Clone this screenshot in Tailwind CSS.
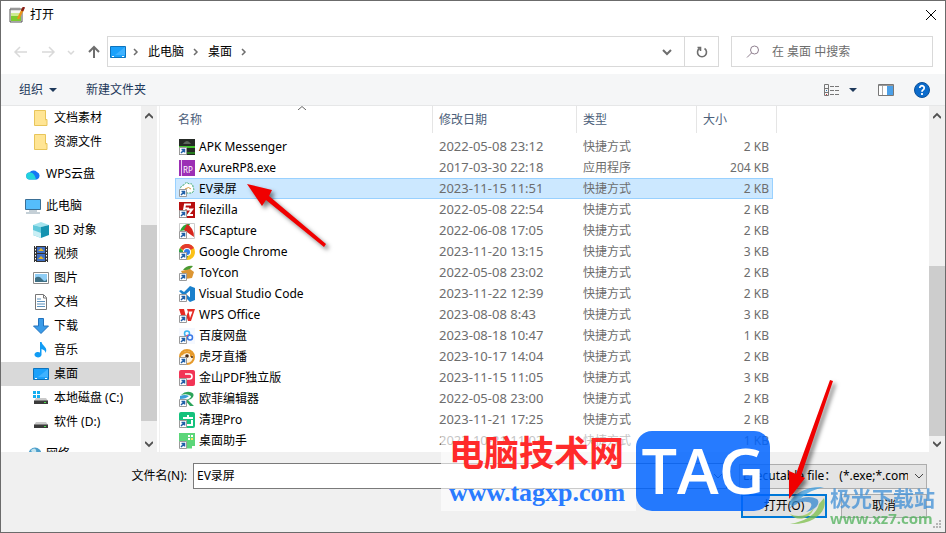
<!DOCTYPE html>
<html lang="zh-CN">
<head>
<meta charset="utf-8">
<meta name="viewport" content="width=device-width, initial-scale=1">
<title>打开</title>
<script src="https://cdn.jsdelivr.net/npm/@tailwindcss/browser@4"></script>
</head>

<body class="bg-white text-black text-xs font-['Noto_Sans','Noto_Sans_CJK_SC',sans-serif]">

<div class="relative h-screen flex flex-col border border-[#6b6b6b] overflow-hidden">

  <!-- Title bar -->
  <header class="flex items-center justify-between h-7 pl-2 pr-1 shrink-0">
    <div class="flex items-center gap-1">
      <svg class="w-4 h-4" viewBox="0 0 16 16">
        <path d="M1 2h12v13H1z" fill="#f4f4f4" stroke="#555"/>
        <path d="M2 8h10v6H2z" fill="#7ccb2f"/><path d="M2 6h10v3H2z" fill="#cdeb8f"/>
        <path d="M2 .5v3M4 .5v3M6 .5v3M8 .5v3M10 .5v3" stroke="#888"/>
        <path d="M14 2L9 12" stroke="#e8941a" stroke-width="2.500"/>
        <path d="M15 0l-2 4" stroke="#8a1f16" stroke-width="2.500"/>
      </svg>
      <h1 class="ml-px">打开</h1>
    </div>
    <button class="p-1" aria-label="关闭">
      <svg class="w-3 h-3" viewBox="0 0 12 12" fill="none" stroke="#000"><path d="M1 1l10 10M11 1L1 11"/></svg>
    </button>
  </header>

  <!-- Navigation and address -->
  <div class="flex items-center h-11 pt-px pl-3 pr-3 shrink-0">
    <nav class="flex items-center w-[93px] gap-[11px] shrink-0">
      <button aria-label="后退"><svg class="w-4 h-4" viewBox="0 0 16 16" fill="none" stroke="#d9d9d9" stroke-width="1.500"><path d="M14 8H2M7 3L2 8l5 5"/></svg></button>
      <button aria-label="前进"><svg class="w-4 h-4" viewBox="0 0 16 16" fill="none" stroke="#d9d9d9" stroke-width="1.500"><path d="M2 8h12M9 3l5 5-5 5"/></svg></button>
      <button aria-label="最近"><svg class="w-2 h-2" viewBox="0 0 8 8" fill="none" stroke="#d9d9d9" stroke-width="1.500"><path d="M1 3l3 3 3-3"/></svg></button>
      <button aria-label="向上"><svg class="w-4 h-4" viewBox="0 0 16 16" fill="none" stroke="#6e6e6e" stroke-width="2"><path d="M8 14V3M3 8l5-5 5 5"/></svg></button>
    </nav>
    <div class="flex flex-1 items-center h-[31px] border border-[#d9d9d9] ml-px">
      <div class="flex flex-1 items-center h-full pl-0.5">
        <svg class="w-4 h-4" viewBox="0 0 16 16"><path d="M.5 2.500h15v11H.5z" fill="#1ba1fb" stroke="#0d73bd"/><path d="M15 3v8L5 11z" fill="#3fb2ff"/><path d="M2 12.500h2M12 12.500h2" stroke="#fff"/></svg>
        <svg class="w-2 h-2 ml-1.5" viewBox="0 0 8 8" fill="none" stroke="#6e6e6e" stroke-width="1.500"><path d="M2 1l3 3-3 3"/></svg>
        <a href="#" class="ml-2">此电脑</a>
        <svg class="w-2 h-2 ml-2" viewBox="0 0 8 8" fill="none" stroke="#6e6e6e" stroke-width="1.500"><path d="M2 1l3 3-3 3"/></svg>
        <a href="#" class="ml-2">桌面</a>
        <svg class="w-2 h-2 ml-2" viewBox="0 0 8 8" fill="none" stroke="#6e6e6e" stroke-width="1.500"><path d="M2 1l3 3-3 3"/></svg>
      </div>
      <button class="px-3" aria-label="历史"><svg class="w-2.5 h-2.5" viewBox="0 0 10 10" fill="none" stroke="#6e6e6e" stroke-width="2"><path d="M1 3l4 4 4-4"/></svg></button>
      <button class="flex items-center justify-center w-[34px] h-full border-l border-[#d9d9d9]" aria-label="刷新">
        <svg class="w-3 h-3" viewBox="0 0 12 12" fill="none" stroke="#6e6e6e" stroke-width="1.600"><path d="M8.500 2.500A4.500 4.500 0 1 1 3.500 2.500M1.500 1.500h3v3.500"/></svg>
      </button>
    </div>
    <label class="flex items-center w-[202px] h-[31px] border border-[#d9d9d9] ml-3 pl-3.5 gap-3">
      <svg class="w-3.5 h-3.5 shrink-0" viewBox="0 0 14 14" fill="none" stroke="#8f7f8f"><circle cx="8.500" cy="5" r="4"/><path d="M5.500 8L1 12.500"/></svg>
      <input type="text" placeholder="在 桌面 中搜索" class="w-full outline-none placeholder:text-[#6d6d6d]">
    </label>
  </div>

  <!-- Command bar -->
  <div class="flex items-center justify-between h-8 mt-px bg-[#f5f6f7] border-b border-[#e6e7e8] text-[#1e395b] pl-[18px] pr-[15px] shrink-0">
    <div class="flex items-center gap-[29px]">
      <button class="flex items-center gap-1.5">组织 <svg class="w-2 h-1" viewBox="0 0 8 4" fill="#1e395b"><path d="M0 0h8L4 4z"/></svg></button>
      <button>新建文件夹</button>
    </div>
    <div class="flex items-center">
      <button class="flex items-center gap-2" aria-label="更改视图">
        <svg class="w-[18px] h-4" viewBox="0 0 18 16" fill="none" stroke="#777"><path d="M1.500 2.500h4v11h-4zM1.500 6.500h4M1.500 10.500h4M7 4.500h4M12 4.500h4M7 8.500h4M12 8.500h4M7 12.500h4M12 12.500h4"/><path d="M3 8.500h1" stroke="#2b78b8"/><path d="M3 12.500h1" stroke="#c33"/></svg>
        <svg class="w-2 h-1" viewBox="0 0 8 4" fill="#1e395b"><path d="M0 0h8L4 4z"/></svg>
      </button>
      <button class="ml-[21px]" aria-label="预览窗格">
        <svg class="w-4 h-4" viewBox="0 0 16 16"><path d="M.5 2.500h15v11H.5z" fill="#fff" stroke="#777"/><path d="M1 3.500h14" stroke="#999"/><path d="M4.500 4v9" stroke="#aaa"/><path d="M9 4h6v9H9z" fill="#4ba0e8"/></svg>
      </button>
      <button class="ml-5" aria-label="帮助">
        <svg class="w-4 h-4" viewBox="0 0 16 16"><circle cx="8" cy="8" r="7.500" fill="#0b6bcb" stroke="#0a4f98"/><path d="M5.800 6a2.200 2.200 0 1 1 3.400 1.800Q8 8.500 8 9.700M8 11v2" fill="none" stroke="#fff" stroke-width="1.800"/></svg>
      </button>
    </div>
  </div>

  <!-- Folder tree and file list -->
  <div class="flex flex-1 min-h-0">
    <aside id="tree" class="w-[139px] overflow-hidden shrink-0"></aside>
    <div class="flex flex-col items-center w-4 bg-[#f0f0f0] ml-px shrink-0">
      <svg class="w-2 h-2 my-1.5 shrink-0" viewBox="0 0 8 8" fill="none" stroke="#505050" stroke-width="1.800"><path d="M0 6l4-4 4 4"/></svg>
      <div class="w-full flex-1 pt-[99px] pb-[15px]"><div class="h-full bg-[#cdcdcd]"></div></div>
      <svg class="w-2 h-2 my-1 shrink-0" viewBox="0 0 8 8" fill="none" stroke="#505050" stroke-width="1.800"><path d="M0 2l4 4 4-4"/></svg>
    </div>
    <main class="flex-1 overflow-hidden border-l border-[#f0f0f0] ml-0.5 pl-[15px]">
      <table class="table-fixed w-[602px] border-separate border-spacing-0 text-[#6d6d6d]">
        <thead>
          <tr class="h-[27px] text-[#4c607a] text-left">
            <th class="relative w-[258px] font-normal border-r border-[#e5e5e5] pl-[3px]">名称
              <svg class="absolute top-0 left-[123px] w-2 h-1" viewBox="0 0 8 4" fill="none" stroke="#666"><path d="M0 4l4-3.500L8 4"/></svg>
            </th>
            <th class="w-36 font-normal border-r border-[#e5e5e5] pl-1.5">修改日期</th>
            <th class="w-[120px] font-normal border-r border-[#e5e5e5] pl-1.5">类型</th>
            <th class="w-[76px] font-normal pl-1.5">大小</th>
            <th class="border-r border-[#e5e5e5]"></th>
          </tr>
          <tr class="h-[3px]"></tr>
        </thead>
        <tbody id="files"></tbody>
      </table>
    </main>
    <div class="flex flex-col items-center w-4 bg-[#f0f0f0] shrink-0">
      <svg class="w-2 h-2 my-1.5 shrink-0" viewBox="0 0 8 8" fill="none" stroke="#505050" stroke-width="1.800"><path d="M0 6l4-4 4 4"/></svg>
      <div class="w-full flex-1 pt-[140px]"><div class="h-full bg-[#cdcdcd]"></div></div>
      <svg class="w-2 h-2 my-1 shrink-0" viewBox="0 0 8 8" fill="none" stroke="#505050" stroke-width="1.800"><path d="M0 2l4 4 4-4"/></svg>
    </div>
  </div>

  <!-- File name and actions -->
  <footer class="bg-[#f0f0f0] pt-[11px] pb-3.5 pr-[18px] shrink-0">
    <div class="flex items-center">
      <label for="filename" class="w-48 text-right pr-1.5 shrink-0">文件名(N):</label>
      <div class="flex flex-1 items-center h-[26px] bg-white border border-[#7a7a7a]">
        <input id="filename" type="text" value="EV录屏" class="flex-1 outline-none pl-[3px]">
        <svg class="w-2 h-2 mr-1" viewBox="0 0 8 8" fill="none" stroke="#444"><path d="M0 2l4 4 4-4"/></svg>
      </div>
      <div class="relative w-[188px] ml-3">
        <select aria-label="文件类型" class="appearance-none w-full h-[25px] bg-[#e4e4e4] border border-[#adadad] pl-[3px] pr-[18px]">
          <option>Executable file： (*.exe;*.com)</option>
        </select>
        <svg class="absolute right-1 top-2 w-2 h-2" viewBox="0 0 8 8" fill="none" stroke="#444"><path d="M0 2l4 4 4-4"/></svg>
      </div>
    </div>
    <div class="flex justify-end gap-3.5 mt-[5px]">
      <button class="w-[86px] h-6 bg-[#e1e1e1] border-2 border-[#0078d7]">打开(O)</button>
      <button class="w-[86px] h-6 bg-[#e1e1e1] border border-[#adadad]">取消</button>
    </div>
  </footer>

  <!-- Resize grip -->
  <svg class="absolute right-1 bottom-1 w-2 h-2" viewBox="0 0 8 8" fill="#b5b5b5"><path d="M6 0h2v2H6zM3 3h2v2H3zM6 3h2v2H6zM0 6h2v2H0zM3 6h2v2H3zM6 6h2v2H6z"/></svg>

  <!-- Site stamps -->
  <div class="absolute left-[440px] bottom-[21px] flex w-[329px] h-20">
    <div class="flex-1 pl-2 pt-0.5 whitespace-nowrap bg-white/60">
      <p class="text-[35px] leading-10 font-bold text-[#ff2a2a]">电脑技术网</p>
      <p class="pt-1 text-[26px] leading-8 font-bold text-[#2a7bff] font-['Liberation_Serif',serif]">www.tagxp.com</p>
    </div>
    <div class="flex items-center justify-center w-[134px] h-20 pb-1 rounded-2xl bg-[#0064ff]/85 text-white text-[63px] leading-none font-semibold font-['Open_Sans',sans-serif]">TAG</div>
  </div>
  <div class="absolute right-2.5 bottom-1.5 flex items-center gap-1 opacity-75">
    <svg class="w-10 h-10" viewBox="0 0 40 40">
      <path d="M3 17C9 6 22 0 38 1C26 4 15 9 11 18C7 21 4 20 3 17z" fill="#3f9fe0"/>
      <path d="M2 25C8 12 22 8 31 13C35 17 30 24 20 26C27 21 27 16 21 16C14 15 7 18 2 25z" fill="#3488d0"/>
      <path d="M38 12C42 24 30 39 4 38C20 35 31 28 33 18z" fill="#7cbf4a"/>
      <path d="M4 28C12 32 22 30 28 22C24 34 10 36 4 28z" fill="#9ccb52"/>
    </svg>
    <div class="whitespace-nowrap">
      <p class="text-[21px] leading-6 font-bold text-[#3f8fd6]">极光下载站</p>
      <p class="text-[15px] leading-4 font-bold text-[#4fb05a]">www.xz7.com</p>
    </div>
  </div>

  <!-- Pointer arrows -->
  <svg class="absolute left-[239px] top-[175px] w-24 h-20 drop-shadow-[3px_3px_2px_rgba(0,0,0,0.5)]" viewBox="0 0 96 80"><path d="M7 8L32 14L29 20L86 68L84 71L26 24L22 30z" fill="#f00000"/></svg>
  <svg class="absolute left-[779px] bottom-[30px] w-16 h-[124px] drop-shadow-[3px_3px_2px_rgba(0,0,0,0.5)]" viewBox="0 0 64 124"><path d="M9 121L9 93L16 96L50 2L53 3L21 98L25 100z" fill="#f00000"/></svg>
</div>

<script>
  const screenIcon = '<path d="M.5 2.500h15v11H.5z" fill="#1ba1fb" stroke="#0d73bd"/><path d="M15 3v8L5 11z" fill="#3fb2ff"/><path d="M2 12.500h2M12 12.500h2" stroke="#fff"/>';
  const folderIcon = '<path d="M1.500.5h11v15h-11z" fill="#ffe594" stroke="#e8c55a"/><path d="M12.500 9.500h1.500v6h-3" fill="#ffe594" stroke="#e8c55a"/>';
  const driveIcon = '<path d="M3 8h10l2 3v3H1v-3z" fill="#c9c9c9"/><path d="M1 10.500h14V14H1z" fill="#3b3b3b"/><path d="M11 12.500h2" stroke="#4be04b"/>';

  const tree = [
    { name: '文档素材', level: 2, icon: folderIcon },
    { name: '资源文件', level: 2, icon: folderIcon },
    { name: 'WPS云盘', level: 1, gap: true, icon: '<path d="M5 13.500a3.500 3.500 0 0 1-.5-7A5 5 0 0 1 12 6a4 4 0 0 1 0 7.500z" fill="#1477f5"/><path d="M5 13.500a3.500 3.500 0 0 1-.5-7C8 6 10 9 11 13.500z" fill="#22d3dc"/>' },
    { name: '此电脑', level: 1, gap: true, icon: '<path d="M.5 1.500h15v10H.5z" fill="#55bdfc" stroke="#3a6f96"/><path d="M1 15h14M4 13h8" stroke="#8aa0ae"/>' },
    { name: '3D 对象', level: 2, icon: '<path d="M0 3l8-3 8 3-8 2z" fill="#a5e4ee"/><path d="M0 3l8 2v11l-8-3z" fill="#62c8da"/><path d="M16 3L8 5v11l8-3z" fill="#1593b0"/><path d="M0 8l8 3v5l-8-3z" fill="#c9eff5"/>' },
    { name: '视频', level: 2, icon: '<path d="M1 0h14v16H1z" fill="#333"/><path d="M4 1h8v6H4zM4 8h8v7H4z" fill="#3f6fc4"/><path d="M5 5l3-3 3 3zM5 13l3-3 3 3z" fill="#e0b52c"/><path d="M2.500 0v16M13.500 0v16" stroke="#fff" stroke-dasharray="1.500"/>' },
    { name: '图片', level: 2, icon: '<path d="M.5 2.500h15v11H.5z" fill="#fff" stroke="#8b8b8b"/><path d="M2 4h12v8H2z" fill="#8fcdf5"/><path d="M2 8q4-3 7 1t5 0v3H2z" fill="#3e6f84"/>' },
    { name: '文档', level: 2, icon: '<path d="M2.500.5h8l3 3v12h-11z" fill="#fff" stroke="#777"/><path d="M4 5h4M4 7.500h8M4 10h8M4 12.500h8" stroke="#5b91bd"/><path d="M10.500 1v3h3" fill="none" stroke="#777"/>' },
    { name: '下载', level: 2, icon: '<path d="M5.500.5h5V8h5L8 15.500.5 8h5z" fill="#3a9be8" stroke="#2272bd"/>' },
    { name: '音乐', level: 2, icon: '<path d="M7 0h1.500q.5 2.500 3 4.500 3 2.500 1 6.500 0-3-4-4v6a3.500 2.700 0 1 1-1.500-2.500z" fill="#119cf4"/>' },
    { name: '桌面', level: 2, selected: true, icon: screenIcon },
    { name: '本地磁盘 (C:)', level: 2, icon: '<path d="M0 1h3v3H0zM4 1h3v3H4zM0 5h3v3H0zM4 5h3v3H4z" fill="#15aef0"/>' + driveIcon },
    { name: '软件 (D:)', level: 2, icon: driveIcon },
    { name: '网络', level: 1, gap: true, icon: '<circle cx="10" cy="8" r="6.500" fill="#4d9fcb"/><path d="M6 4q4-3 5 0t-3 5z" fill="#c3e4ef"/>' }
  ];

  const files = [
    { name: 'APK Messenger', date: '2022-05-08 23:12', size: 2, icon: '<path d="M0 0h16v16H0z" fill="#252a25"/><path d="M0 7h16v2H0z" fill="#43c22e"/><path d="M4 5q4-6 8 0z" fill="#5c665c"/><path d="M0 13h16v2H0z" fill="#267b1d"/>' },
    { name: 'AxureRP8.exe', date: '2017-03-30 22:18', type: '应用程序', size: 204, plain: true, icon: '<path d="M0 0h16v16H0z" fill="#9c2fb5"/><path d="M2.500 0v16" stroke="#e8c8ef"/><text x="4" y="13" font-size="8" fill="#fff">RP</text>' },
    { name: 'EV录屏', date: '2023-11-15 11:51', size: 2, selected: true, icon: '<path d="M4 12Q0 9 2 6q1-2 3-2 2-4 5-1 4-1 4 3 2 3-1 6z" fill="#fff" stroke="#3aa66a" stroke-dasharray="2 1"/><path d="M6 8q4-3 6 0" stroke="#d99a3a" fill="none"/>' },
    { name: 'filezilla', date: '2022-05-08 22:54', size: 2, icon: '<path d="M0 0h16v16H0z" fill="#b70f0f"/><path d="M12 2.500H6L4.500 11M4.500 6.500H10M8 7.500h5L9 13h5" fill="none" stroke="#fff" stroke-width="2"/>' },
    { name: 'FSCapture', date: '2022-06-08 17:05', size: 2, icon: '<path d="M.5.5h15v15H.5z" fill="#fff" stroke="#ccc"/><path d="M1 8Q4 0 11 1L8 7z" fill="#2ca335"/><path d="M8 1q7 4 7 13L5 7z" fill="#d7261e"/>' },
    { name: 'Google Chrome', date: '2023-11-20 13:15', size: 3, icon: '<circle cx="8" cy="8" r="8" fill="#fbc116"/><path d="M8 8L1 4a8 8 0 0 1 14 0z" fill="#e33b2e"/><path d="M1 4a8 8 0 0 0 6 12l3-6-4-1z" fill="#2ba24c"/><circle cx="8" cy="8" r="4" fill="#fff"/><circle cx="8" cy="8" r="3" fill="#2f7de9"/>' },
    { name: 'ToYcon', date: '2022-05-08 23:02', size: 2, icon: '<path d="M2 6l9-2 4 3-2 6-7 1z" fill="#dc9634"/><path d="M4 5q4-5 10-4-3 4-7 4z" fill="#4b9a32"/>' },
    { name: 'Visual Studio Code', date: '2023-11-22 12:39', size: 2, icon: '<path fill-rule="evenodd" d="M11 0l5 2v12l-5 2-6-6-3 2-2-1 3-3-3-3 2-1 3 2zM11 4.500L7 8l4 3.500z" fill="#1a80cc"/>' },
    { name: 'WPS Office', date: '2023-08-08 8:43', size: 3, icon: '<path d="M0 2h5l2 8 2-5-1-3h8l-4 12H9L8 11l-1 3H4z" fill="#e52b24"/><path d="M9.500 4.500h4L11 11z" fill="#fff"/>' },
    { name: '百度网盘', date: '2023-08-18 10:47', size: 1, icon: '<path d="M0 0h16v16H0z" fill="#f6f9ff"/><circle cx="8" cy="5.500" r="2.500" fill="none" stroke="#3cb5f2" stroke-width="1.500"/><circle cx="11" cy="9.500" r="2.500" fill="none" stroke="#3978e8" stroke-width="1.500"/><path d="M6 9l3-2" stroke="#f0506a" stroke-width="1.500"/>' },
    { name: '虎牙直播', date: '2023-10-17 14:04', size: 2, icon: '<circle cx="8" cy="8" r="7" fill="#fff3df" stroke="#e69a2b" stroke-width="2"/><path d="M2 6q6-6 12 0M12 4v4" fill="none" stroke="#e69a2b" stroke-width="2"/><circle cx="8" cy="7" r="1.800" fill="#4a2b14"/><circle cx="13" cy="8" r="1" fill="#4a2b14"/>' },
    { name: '金山PDF独立版', date: '2023-11-15 11:05', size: 3, icon: '<rect width="16" height="16" rx="2" fill="#f23556"/><path d="M6 4h4.500a2.300 2.300 0 0 1 0 5H7v4" fill="none" stroke="#fff" stroke-width="1.600"/>' },
    { name: '欧菲编辑器', date: '2022-05-08 23:00', size: 2, icon: '<path d="M2 4Q6 0 11 1q5 1 3 5-2 3-5 3l6 6h-4L6 9q6-1 6-4-4-3-10-1z" fill="#2ca45a"/><path d="M1 5q5-2 9 0-3 3-9 3z" fill="#3a9fd8"/>' },
    { name: '清理Pro', date: '2023-11-21 17:25', size: 2, icon: '<rect width="16" height="16" rx="2" fill="#15c27d"/><path d="M4 6h10M9 3v3M6 8v5h7V8" fill="none" stroke="#fff" stroke-width="2"/>' },
    { name: '桌面助手', date: '2023-10-21 11:03', size: 1, icon: '<path d="M0 0h16v13H0z" fill="#5cd67a"/><path d="M9 2h2v2H9zM12 2h2v2h-2zM9 5h2v2H9z" fill="#fff"/><path d="M12 5h2v2h-2z" fill="#ffe45a"/><path d="M6 14h7" stroke="#5cd67a" stroke-width="3"/>' }
  ];

  // small arrow box in the corner of a shortcut icon
  const shortcut = '<path d="M.5 8.500h7v7h-7z" fill="#fff" stroke="#9a9a9a"/><path d="M2 14l3-3M2.500 10.500h3v3" fill="none" stroke="#1f5fa8" stroke-width="1.500"/>';

  document.getElementById('tree').innerHTML = tree.map(t => `
    <a href="#" class="flex items-center h-6 whitespace-nowrap ${t.level === 1 ? 'pl-6' : 'pl-8'} ${t.gap ? 'mt-2' : ''} ${t.selected ? 'bg-[#d9d9d9]' : ''}">
      <svg class="w-4 h-4 shrink-0 mr-1" viewBox="0 0 16 16">${t.icon}</svg>
      <span class="ml-px">${t.name}</span>
    </a>`).join('');

  document.getElementById('files').innerHTML = files.map(f => {
    const sel = f.selected ? 'bg-[#cce8ff] border-y border-[#99d1ff]' : '';
    return `
    <tr class="h-[21px] leading-[19px] whitespace-nowrap">
      <td class="p-0 text-black ${sel} ${f.selected ? 'border-l pl-[3px]' : 'pl-1'}">
        <div class="flex items-center gap-1">
          <svg class="w-4 h-4" viewBox="0 0 16 16">${f.icon}${f.plain ? '' : shortcut}</svg>
          <span>${f.name}</span>
        </div>
      </td>
      <td class="py-0 pl-1.5 text-[13px] ${sel}">${f.date}</td>
      <td class="py-0 pl-1.5 ${sel}">${f.type || '快捷方式'}</td>
      <td class="py-0 text-right ${sel} ${f.selected ? 'border-r pr-[3px]' : 'pr-1'}">${f.size} KB</td>
    </tr>`;
  }).join('');
</script>
</body>
</html>
